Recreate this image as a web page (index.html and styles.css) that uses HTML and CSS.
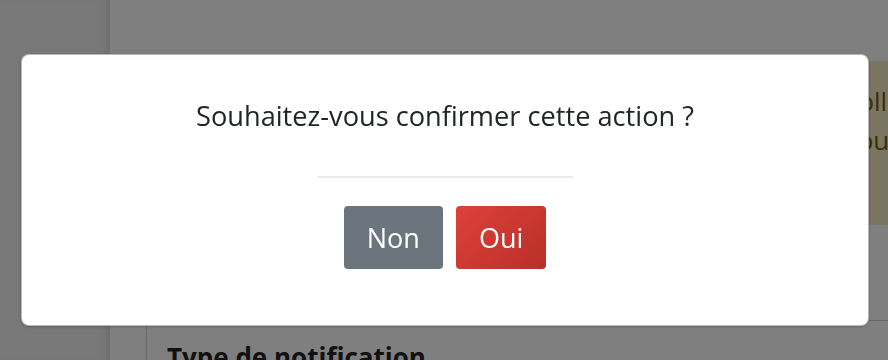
FILE: index.html
```html
<!DOCTYPE html>
<html lang="fr">
<head>
<meta charset="utf-8">
<title>Confirmation</title>
<link rel="stylesheet" href="styles.css">
</head>
<body>
<div class="app">
  <aside class="sidebar"></aside>
  <main class="main">
    <div class="top-row">
      <section class="form-col"></section>
      <section class="info-col">
        <div class="alert">
          <p>Collecte</p>
          <p>Pour</p>
        </div>
      </section>
    </div>
    <div class="card">
      <h2 class="card-title">Type de notification</h2>
    </div>
  </main>
</div>

<div class="backdrop"></div>
<div class="modal" role="dialog">
  <p class="modal-title">Souhaitez-vous confirmer cette action ?</p>
  <hr class="modal-divider">
  <div class="modal-actions">
    <button class="btn btn-secondary">Non</button>
    <button class="btn btn-danger">Oui</button>
  </div>
</div>
</body>
</html>
```

FILE: styles.css
```css
* { box-sizing: border-box; }

html, body {
  margin: 0;
  padding: 0;
  width: 888px;
  height: 360px;
  overflow: hidden;
  background: #ffffff;
  font-family: "Open Sans", "Noto Sans", "Liberation Sans", sans-serif;
  color: #212529;
}

.app {
  display: flex;
  height: 360px;
}

.sidebar {
  width: 110px;
  flex: none;
  background: #f0f0f0;
  box-shadow: inset -8px 0 8px -6px rgba(0, 0, 0, 0.12);
}

.main {
  flex: 1;
  padding: 61px 0 0 36px;
  display: flex;
  flex-direction: column;
  overflow: hidden;
}

.top-row {
  flex: none;
  display: grid;
  grid-template-columns: 690px 320px;
  height: 259px;
}

.alert {
  height: 164px;
  background: #f4eac4;
  color: #7a5a02;
  padding: 21px 6px;
  font-size: 26px;
  line-height: 39px;
}

.alert p {
  margin: 0;
  white-space: nowrap;
}

.card {
  flex: none;
  border-top: 1px solid #cfcfcf;
  border-left: 1px solid #cfcfcf;
  padding: 21px 20px;
}

.card-title {
  margin: 0;
  font-size: 26px;
  font-weight: 700;
  line-height: 1.2;
  color: #222;
}

.backdrop {
  position: fixed;
  inset: 0;
  background: rgba(0, 0, 0, 0.5);
}

.modal {
  position: fixed;
  left: 21px;
  top: 54px;
  width: 848px;
  height: 272px;
  background: #ffffff;
  border: 1px solid rgba(0, 0, 0, 0.28);
  border-radius: 8px;
  box-shadow: 0 1px 3px rgba(0, 0, 0, 0.2);
  padding: 43px 20px 0;
  display: flex;
  flex-direction: column;
  align-items: center;
}

.modal-title {
  margin: 0;
  font-size: 27.2px;
  line-height: 36px;
  color: #212529;
}

.modal-divider {
  width: 256px;
  height: 2px;
  margin: 42px 0 28px;
  border: 0;
  background: #e9e9ef;
}

.modal-actions {
  display: flex;
  gap: 13px;
}

.btn {
  font-family: inherit;
  font-size: 27px;
  line-height: 37px;
  padding: 13px 23px;
  border: 0;
  border-radius: 4px;
  color: #ffffff;
}

.btn-secondary {
  background: #6c757d;
}

.btn-danger {
  background: linear-gradient(135deg, #de4039, #b8302a);
}
```
